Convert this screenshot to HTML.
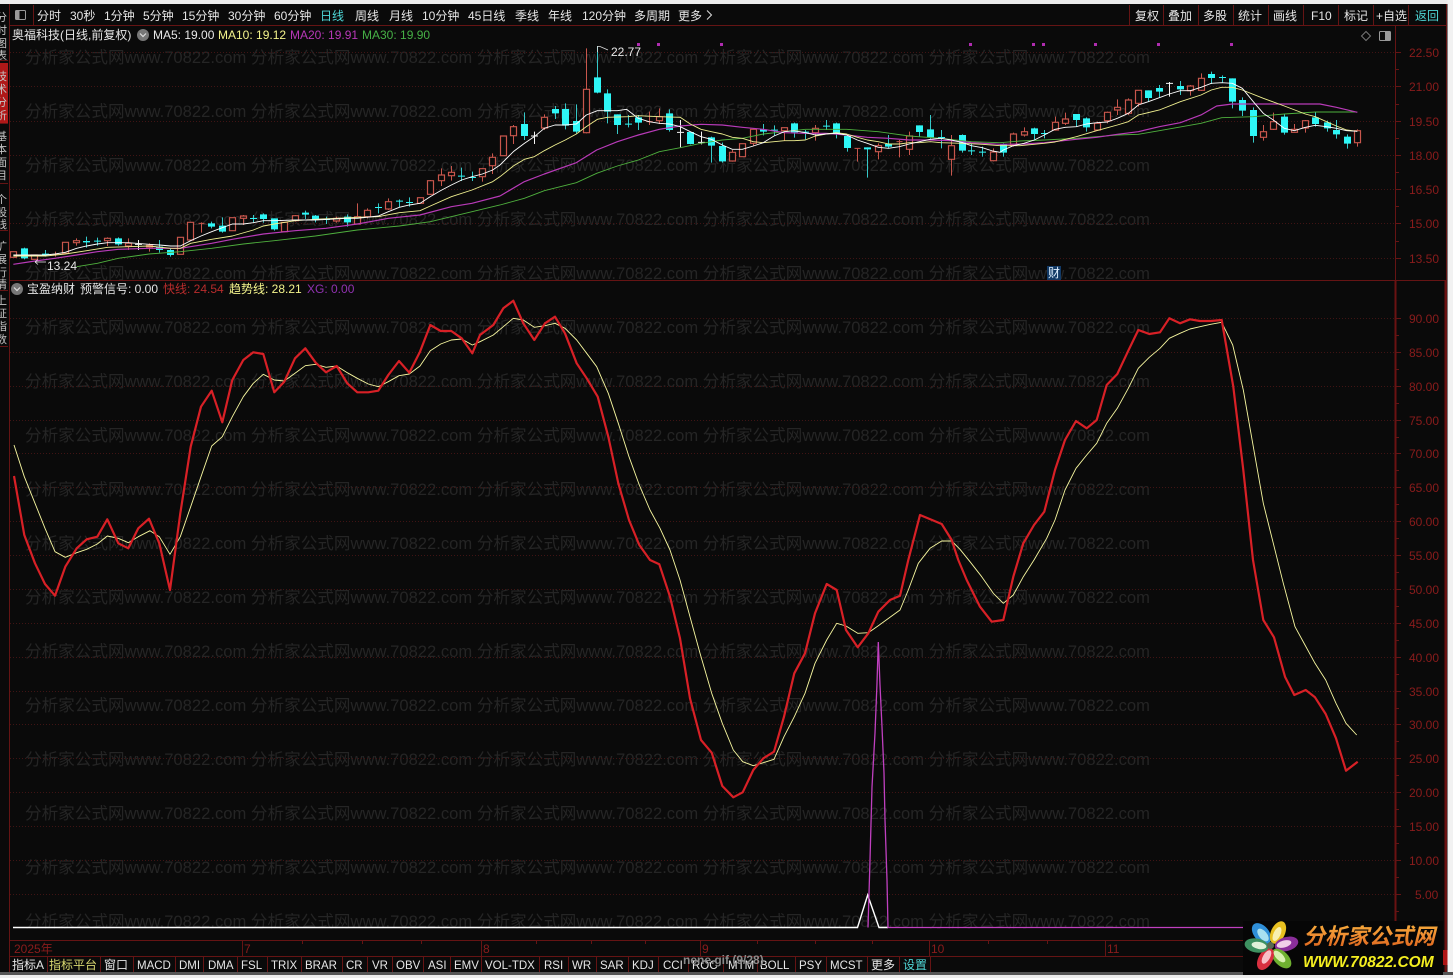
<!DOCTYPE html>
<html><head><meta charset="utf-8"><style>
html,body{margin:0;padding:0;background:#0a0a0a;width:1453px;height:978px;overflow:hidden}
svg{display:block;position:absolute;left:0;top:0;font-family:"Liberation Sans","Noto Sans CJK SC",sans-serif;font-size:12px;filter:blur(.3px)}
.ns *{vector-effect:non-scaling-stroke}
.wm text{font-size:16.6px;fill:#252525}
.t text{fill:#e6e6e6}
.ax text{fill:#8a1c1c}
.b text{font-size:11.5px;fill:#e6e6e6}
</style></head><body>
<svg width="1453" height="978" viewBox="0 0 1453 978" xmlns="http://www.w3.org/2000/svg">
<defs><linearGradient id="lg" x1="0" y1="0" x2="0" y2="1"><stop offset="0" stop-color="#f8b840"/><stop offset=".55" stop-color="#ee8a30"/><stop offset="1" stop-color="#d85a18"/></linearGradient></defs>
<rect width="1453" height="978" fill="#0a0a0a"/>
<g class="wm">
<text x="25" y="9">分析家公式网www.70822.com 分析家公式网www.70822.com 分析家公式网www.70822.com 分析家公式网www.70822.com 分析家公式网www.70822.com</text>
<text x="25" y="63">分析家公式网www.70822.com 分析家公式网www.70822.com 分析家公式网www.70822.com 分析家公式网www.70822.com 分析家公式网www.70822.com</text>
<text x="25" y="117">分析家公式网www.70822.com 分析家公式网www.70822.com 分析家公式网www.70822.com 分析家公式网www.70822.com 分析家公式网www.70822.com</text>
<text x="25" y="171">分析家公式网www.70822.com 分析家公式网www.70822.com 分析家公式网www.70822.com 分析家公式网www.70822.com 分析家公式网www.70822.com</text>
<text x="25" y="225">分析家公式网www.70822.com 分析家公式网www.70822.com 分析家公式网www.70822.com 分析家公式网www.70822.com 分析家公式网www.70822.com</text>
<text x="25" y="279">分析家公式网www.70822.com 分析家公式网www.70822.com 分析家公式网www.70822.com 分析家公式网www.70822.com 分析家公式网www.70822.com</text>
<text x="25" y="333">分析家公式网www.70822.com 分析家公式网www.70822.com 分析家公式网www.70822.com 分析家公式网www.70822.com 分析家公式网www.70822.com</text>
<text x="25" y="387">分析家公式网www.70822.com 分析家公式网www.70822.com 分析家公式网www.70822.com 分析家公式网www.70822.com 分析家公式网www.70822.com</text>
<text x="25" y="441">分析家公式网www.70822.com 分析家公式网www.70822.com 分析家公式网www.70822.com 分析家公式网www.70822.com 分析家公式网www.70822.com</text>
<text x="25" y="495">分析家公式网www.70822.com 分析家公式网www.70822.com 分析家公式网www.70822.com 分析家公式网www.70822.com 分析家公式网www.70822.com</text>
<text x="25" y="549">分析家公式网www.70822.com 分析家公式网www.70822.com 分析家公式网www.70822.com 分析家公式网www.70822.com 分析家公式网www.70822.com</text>
<text x="25" y="603">分析家公式网www.70822.com 分析家公式网www.70822.com 分析家公式网www.70822.com 分析家公式网www.70822.com 分析家公式网www.70822.com</text>
<text x="25" y="657">分析家公式网www.70822.com 分析家公式网www.70822.com 分析家公式网www.70822.com 分析家公式网www.70822.com 分析家公式网www.70822.com</text>
<text x="25" y="711">分析家公式网www.70822.com 分析家公式网www.70822.com 分析家公式网www.70822.com 分析家公式网www.70822.com 分析家公式网www.70822.com</text>
<text x="25" y="765">分析家公式网www.70822.com 分析家公式网www.70822.com 分析家公式网www.70822.com 分析家公式网www.70822.com 分析家公式网www.70822.com</text>
<text x="25" y="819">分析家公式网www.70822.com 分析家公式网www.70822.com 分析家公式网www.70822.com 分析家公式网www.70822.com 分析家公式网www.70822.com</text>
<text x="25" y="873">分析家公式网www.70822.com 分析家公式网www.70822.com 分析家公式网www.70822.com 分析家公式网www.70822.com 分析家公式网www.70822.com</text>
<text x="25" y="927">分析家公式网www.70822.com 分析家公式网www.70822.com 分析家公式网www.70822.com 分析家公式网www.70822.com 分析家公式网www.70822.com</text>
</g>
<!-- grid -->
<path d="M10 52.5H1395M10 86.5H1395M10 121.5H1395M10 155.5H1395M10 189.5H1395M10 223.5H1395M10 258.5H1395M10 318.5H1395M10 352.5H1395M10 386.5H1395M10 420.5H1395M10 453.5H1395M10 487.5H1395M10 521.5H1395M10 555.5H1395M10 589.5H1395M10 623.5H1395M10 657.5H1395M10 691.5H1395M10 724.5H1395M10 758.5H1395M10 792.5H1395M10 826.5H1395M10 860.5H1395M10 894.5H1395" stroke="#401414" stroke-width="1" stroke-dasharray="1 2" fill="none"/>
<!-- frame -->
<rect x="10" y="4" width="1436" height="21" fill="#0a0a0a"/>
<path d="M9.5 4V972M33.5 5V25M10 25.5H1446M10 280.5H1446M10 940.5H1395M10 956.5H1395M1395.5 25V972M1446.5 4V972" stroke="#651414" stroke-width="1" fill="none"/>
<path d="M1395.5 280V972M1445.5 280V972" stroke="#6a1212" stroke-width="2" fill="none"/>
<path d="M1129.5 5V25M1163.5 5V25M1198.5 5V25M1233.5 5V25M1268.5 5V25M1303.5 5V25M1338.5 5V25M1373.5 5V25M1408.5 5V25" stroke="#651414" fill="none"/>
<path d="M1395 52.5h6M1395 69.5h4M1395 86.5h6M1395 104.5h4M1395 121.5h6M1395 138.5h4M1395 155.5h6M1395 172.5h4M1395 189.5h6M1395 206.5h4M1395 223.5h6M1395 241.5h4M1395 258.5h6M1395 318.5h6M1395 335.5h4M1395 352.5h6M1395 369.5h4M1395 386.5h6M1395 403.5h4M1395 420.5h6M1395 437.5h4M1395 453.5h6M1395 470.5h4M1395 487.5h6M1395 504.5h4M1395 521.5h6M1395 538.5h4M1395 555.5h6M1395 572.5h4M1395 589.5h6M1395 606.5h4M1395 623.5h6M1395 640.5h4M1395 657.5h6M1395 674.5h4M1395 691.5h6M1395 708.5h4M1395 724.5h6M1395 741.5h4M1395 758.5h6M1395 775.5h4M1395 792.5h6M1395 809.5h4M1395 826.5h6M1395 843.5h4M1395 860.5h6M1395 877.5h4M1395 894.5h6M1395 911.5h4" stroke="#651414" fill="none"/>
<path d="M242.5 941V956M302.5 941v3M362.5 941v3M421.5 941v3M481.5 941V956M536.5 941v3M591.5 941v3M645.5 941v3M700.5 941V956M757.5 941v3M815.5 941v3M872.5 941v3M929.5 941V956M988.5 941v3M1047.5 941v3M1105.5 941V956" stroke="#651414" fill="none"/>
<path d="M47.5 957V972M100.5 957V972M133.5 957V972M175.5 957V972M203.5 957V972M237.5 957V972M267.5 957V972M301.5 957V972M342.5 957V972M367.5 957V972M392.5 957V972M423.5 957V972M450.5 957V972M481.5 957V972M539.5 957V972M568.5 957V972M596.5 957V972M628.5 957V972M658.5 957V972M688.5 957V972M723.5 957V972M757.5 957V972M795.5 957V972M826.5 957V972M867.5 957V972M899.5 957V972M930.5 957V972" stroke="#651414" fill="none"/>
<!-- candles -->
<g class="ns" transform="scale(1 .33333)" fill="none">
<path stroke="#c8564c" stroke-width="1" d="M55.5 755V770M52.5 763H58.5M76.5 715V737M107.5 712V738M128.5 715V750M149.5 730V755M201.5 667V698M198.5 670H204.5M243.5 645V675M295.5 645V665M336.5 650V668M357.5 610V672M367.5 625V655M388.5 595V630M430.5 540V585M441.5 505V558M451.5 498V542M482.5 505V545M492.5 460V522M513.5 375V432M544.5 343V390M586.5 145V400M649.5 335V375M646.5 365H652.5M659.5 325V372M732.5 450V485M753.5 385V438M784.5 382V422M815.5 375V422M857.5 445V485M854.5 445H860.5M878.5 430V478M899.5 420V472M896.5 425H902.5M909.5 395V465M951.5 405V527M993.5 445V484M1013.5 398V440M1024.5 382V410M1055.5 350V392M1065.5 338V375M1097.5 365V392M1107.5 335V370M1117.5 298V345M1128.5 295V345M1138.5 270V320M1190.5 255V287M1201.5 220V273M1263.5 375V422M1273.5 338V390M1294.5 372V398M1305.5 360V398M1357.5 388V440"/>
<path stroke="#c8564c" stroke-width="1.2" fill="#0a0a0a" d="M10.5 755H16.5V772H10.5ZM31.5 765H37.5V778H31.5ZM62.5 727H68.5V760H62.5ZM73.5 722H79.5V728H73.5ZM104.5 715H110.5V722H104.5ZM125.5 730H131.5V738H125.5ZM146.5 736H152.5V741H146.5ZM177.5 712H183.5V763H177.5ZM187.5 667H193.5V720H187.5ZM229.5 653H235.5V692H229.5ZM240.5 648H246.5V655H240.5ZM281.5 667H287.5V695H281.5ZM292.5 647H298.5V662H292.5ZM333.5 655H339.5V663H333.5ZM354.5 650H360.5V672H354.5ZM364.5 631H370.5V650H364.5ZM385.5 605H391.5V627H385.5ZM417.5 593H423.5V610H417.5ZM427.5 542H433.5V583H427.5ZM438.5 525H444.5V542H438.5ZM448.5 517H454.5V527H448.5ZM479.5 506H485.5V530H479.5ZM489.5 472H495.5V497H489.5ZM500.5 408H506.5V467H500.5ZM510.5 380H516.5V407H510.5ZM541.5 352H547.5V384H541.5ZM583.5 268H589.5V398H583.5ZM656.5 350H662.5V362H656.5ZM729.5 457H735.5V483H729.5ZM739.5 431H745.5V470H739.5ZM750.5 388H756.5V430H750.5ZM781.5 383H787.5V392H781.5ZM812.5 385H818.5V398H812.5ZM875.5 437H881.5V455H875.5ZM906.5 408H912.5V448H906.5ZM948.5 437H954.5V478H948.5ZM990.5 456H996.5V482H990.5ZM1010.5 402H1016.5V435H1010.5ZM1021.5 395H1027.5V405H1021.5ZM1052.5 367H1058.5V390H1052.5ZM1062.5 357H1068.5V370H1062.5ZM1094.5 370H1100.5V390H1094.5ZM1104.5 337H1110.5V362H1104.5ZM1114.5 322H1120.5V330H1114.5ZM1125.5 300H1131.5V340H1125.5ZM1135.5 271H1141.5V310H1135.5ZM1187.5 258H1193.5V272H1187.5ZM1198.5 235H1204.5V271H1198.5ZM1260.5 395H1266.5V412H1260.5ZM1270.5 365H1276.5V388H1270.5ZM1291.5 388H1297.5V397H1291.5ZM1302.5 362H1308.5V384H1302.5ZM1354.5 392H1360.5V428H1354.5Z"/>
<path stroke="#35c8c8" stroke-width="1" d="M24.5 743V778M45.5 750V770M86.5 710V743M97.5 713V737M118.5 712V737M159.5 720V758M170.5 745V770M211.5 665V685M222.5 652V698M253.5 645V667M263.5 640V668M274.5 655V692M305.5 632V657M315.5 645V667M326.5 650V672M347.5 643V680M378.5 610V640M399.5 598V622M409.5 592V620M461.5 503V543M472.5 515V543M524.5 337V420M555.5 318V357M565.5 310V388M576.5 313V400M597.5 138V280M607.5 268V370M617.5 343V402M628.5 345V382M638.5 345V390M669.5 328V395M690.5 395V433M711.5 410V488M722.5 428V488M763.5 372V406M774.5 376V406M794.5 368V413M805.5 390V418M826.5 360V390M836.5 368V415M847.5 405V455M867.5 442V533M888.5 405V445M919.5 376V410M930.5 345V416M941.5 390V445M962.5 403V458M971.5 430V465M982.5 440V470M1003.5 430V470M1034.5 383V418M1044.5 390V415M1076.5 342V380M1086.5 352V395M1148.5 271V305M1159.5 255V292M1180.5 243V285M1211.5 215V252M1222.5 226V248M1232.5 235V325M1242.5 292V348M1253.5 322V428M1284.5 342V404M1315.5 337V380M1327.5 362V395M1336.5 360V416M1347.5 403V446"/>
<path stroke="#2ef6f6" stroke-width="7" d="M24.5 745V775M45.5 761V764M86.5 723V727M97.5 722V725M118.5 715V733M159.5 740V750M170.5 750V765M211.5 670V680M222.5 677V695M253.5 654V657M263.5 643V657M274.5 655V688M305.5 638V644M315.5 647V660M326.5 657V660M347.5 650V667M378.5 621V624M399.5 602V605M409.5 606V609M461.5 527V530M472.5 531V534M524.5 372V408M555.5 327V340M565.5 327V377M576.5 363V395M597.5 232V278M607.5 280V335M617.5 343V375M628.5 371V374M638.5 352V368M669.5 340V390M690.5 396V432M711.5 412V437M722.5 438V484M763.5 388V395M774.5 389V392M794.5 370V397M805.5 395V398M826.5 377V380M836.5 370V402M847.5 408V444M867.5 442V448M888.5 432V440M919.5 376V396M930.5 388V412M941.5 411V414M962.5 405V452M971.5 451V454M982.5 455V458M1003.5 432V458M1034.5 385V402M1044.5 399V402M1076.5 342V360M1086.5 355V382M1148.5 271V294M1159.5 264V275M1180.5 258V268M1211.5 222V234M1222.5 231V234M1232.5 235V305M1242.5 300V332M1253.5 330V408M1284.5 350V398M1315.5 352V372M1327.5 367V385M1336.5 390V403M1347.5 410V431"/>
<path stroke="#f4f4f4" stroke-width="1" d="M138.5 720V750M135 733H142M534.5 395V432M531 408H538M680.5 360V442M677 397H684M701.5 395V433M698 427H705M1169.5 246V290M1166 250H1173"/>
</g>
<!-- MAs -->
<g class="ns" transform="scale(.33333)" fill="none" stroke-width="1" stroke-linejoin="round">
<g stroke="#4fb03e" stroke-width=".9">
<polyline points="230,800 292,790 355,775 447,762 541,755 635,745 730,732 823,722 946,708 1072,690 1198,678 1291,665 1416,635 1500,615"/>
<polyline transform="translate(1500 0)" points="0,615 73,595 133,572 229,548 290,520 352,498 415,480 478,455 541,443 603,430 667,420 727,415 790,402 853,395 916,388 1040,388 1135,395 1228,408 1322,415 1414,425 1500,428"/>
<polyline transform="translate(3000 0)" points="0,428 60,423 133,420 229,415 352,405 415,403 478,392 603,370 665,353 760,350 853,342 946,336 1072,336"/>
</g>
<g stroke="#b83ab8" stroke-width="1.2">
<polyline points="40,793 105,783 165,775 230,765 292,755 355,748 447,745 541,745 635,730 697,718 790,702 885,692 978,685 1072,672 1165,655 1260,645 1354,620 1416,610 1500,588"/>
<polyline transform="translate(1500 0)" points="0,588 73,545 133,522 229,488 290,450 352,425 415,405 478,388 541,378 603,373 667,375 727,382 790,388 853,398 916,400 978,400 1040,405 1102,412 1165,415 1228,420 1291,420 1354,422 1414,428 1500,433"/>
<polyline transform="translate(3000 0)" points="0,433 72,432 133,428 229,418 290,412 352,403 415,395 478,380 541,368 603,345 650,318 697,312 760,312 853,312 960,312 1009,322 1072,337"/>
</g>
<g stroke="#f0f090" stroke-width=".9">
<polyline points="40,768 137,768 196,762 260,752 323,742 385,740 447,738 512,745 541,745 572,730 635,718 697,708 760,690 790,678 823,672 885,662 946,658 1010,655 1072,652 1135,650 1198,638 1260,632 1291,618 1354,590 1416,570 1478,545 1500,530"/>
<polyline transform="translate(1500 0)" points="0,530 40,498 73,478 103,470 133,452 165,435 196,420 229,402 259,380 292,358 322,352 385,350 415,347 478,350 541,352 571,372 603,388 634,395 667,402 697,412 727,415 760,425 790,428 822,425 853,422 883,422 916,420 946,408 978,402 1009,398 1040,402 1072,412 1102,420 1135,425 1165,432 1198,432 1228,428 1258,428 1291,425 1322,428 1385,430 1447,433 1500,437"/>
<polyline transform="translate(3000 0)" points="0,437 60,437 133,430 165,426 229,410 290,392 352,375 385,365 415,345 478,330 541,305 603,285 634,270 665,262 697,262 727,270 790,295 853,318 916,342 946,350 1009,378 1040,390 1072,394"/>
</g>
<g stroke="#ffffff" stroke-width=".9">
<polyline points="40,765 72,765 137,765 165,762 196,757 230,745 260,738 292,732 323,728 385,728 447,733 478,735 512,738 541,738 572,722 603,708 635,695 667,683 697,672 730,672 760,668 790,662 823,662 885,660 946,660 1042,655 1072,655 1135,648 1165,635 1198,622 1228,615 1260,610 1291,590 1322,572 1354,555 1385,540 1416,530 1447,522 1478,510 1500,495"/>
<polyline transform="translate(1500 0)" points="0,495 40,455 73,430 103,410 133,385 165,375 196,375 229,372 259,345 292,332 322,332 352,332 380,328 415,355 447,365 478,370 508,372 541,380 571,395 603,410 634,418 667,435 697,448 727,448 760,438 790,428 822,408 853,395 883,392 916,398 946,405 978,402 1009,400 1040,405 1072,420 1102,430 1135,442 1165,445 1198,440 1228,432 1258,425 1291,418 1322,415 1354,420 1385,427 1414,437 1447,443 1478,453 1500,457"/>
<polyline transform="translate(3000 0)" points="0,457 10,450 40,437 72,430 103,420 133,405 165,388 196,382 229,380 259,372 290,368 322,366 352,355 385,340 415,315 445,305 478,293 508,282 541,272 571,272 603,262 634,250 665,248 697,250 727,265 760,305 790,340 820,360 853,385 883,392 916,382 946,376 980,380 1009,385 1040,392 1072,394"/>
</g>
</g>
<path d="M637 43h3v3h-3zM657 43h3v3h-3zM720 43h3v3h-3zM969 43h3v3h-3zM1032 43h3v3h-3zM1042 43h3v3h-3zM1094 43h3v3h-3zM1157 43h3v3h-3zM1230 43h3v3h-3z" fill="#b02cb0"/>
<!-- price extremes -->
<path d="M597.5 46V52M597.5 46.500H600L608 50" stroke="#ddd" stroke-width=".8" fill="none"/>
<text x="611" y="56" fill="#e8e8e8">22.77</text>
<path d="M35 262H46M35 262L38 259.5M35 262L38 264.5" stroke="#eee" stroke-width=".8" fill="none"/>
<text x="47" y="270" fill="#e8e8e8">13.24</text>
<rect x="1047" y="266" width="14" height="14" fill="#123a66"/>
<text x="1048" y="277" fill="#dff0ff">财</text>
<!-- lower chart -->
<polyline fill="none" stroke="#f8f8a0" stroke-width=".9" stroke-linejoin="round" points="14,445 24.3,476.7 35,503.3 45,528.3 55,551.7 65.3,557.3 76.7,552.7 86.7,549.3 97.3,544 107.3,536 118.3,538.3 128.3,542.7 138.3,536.7 150,530.7 159.3,536.7 170,554.3 180.3,536.7 190.7,506.7 201,476.7 211.7,446 222.3,436.7 232.3,416.7 243.3,396.7 253.3,383.3 263.3,374.3 274.3,380 284.3,381 295,373.3 305.3,365.7 315.7,364.3 326,367.3 336.7,366 347.3,372.7 357.3,378.3 368.3,384 378.3,386.7 388.3,381.7 399,375.7 409.3,374 420,366 430.3,350.7 440.7,344 451.3,340 461.7,339 472.3,345 480,341.7 493.3,335 503.3,326.7 513.3,318.3 523.3,320 534.3,327.3 545,325.7 555,323.3 565,328.3 576.7,340 586.7,353.3 596.7,366.7 608.3,393.3 618.3,423.3 629,456.7 639.3,485 650,510 660,528.3 670,550 680,580 690,616.7 700,653.3 711.7,693.3 722.3,723.3 733.3,750 742.7,761.7 753.3,765.7 763.3,762.7 774,759.3 784,736.7 794.3,716.7 805,693.3 815,663.3 826.7,640 836.7,623.3 846,626 857.7,633.3 868.3,632.7 878.3,625.7 890,617.3 900,610 908.3,590 918.3,563.3 930,548.3 941.7,541 951.7,541 960,549.3 970,561.7 981.7,576.7 993.3,593.3 1003.3,603.3 1013.3,595 1023.3,576.7 1034,560 1046.7,538.3 1055,520 1065,490 1076,468.3 1086.7,455 1096.7,443.3 1106.7,423.3 1117.3,408.3 1128.3,388.3 1138.3,368.3 1149.3,357.3 1160,348.3 1169.3,338.3 1180,333.3 1190,329 1200,326.7 1210.7,324.3 1221.7,322.3 1232.7,345 1243.3,390 1253.3,446.7 1263.3,503.3 1273.3,543.3 1283.3,583.3 1295,626.7 1305,645 1315,663.3 1325.7,680 1336,703.3 1346,723.3 1356.7,735"/>
<polyline fill="none" stroke="#d82026" stroke-width="2.2" stroke-linejoin="round" points="14,476 24.3,535 35,563.3 45,584 55,595.7 65.3,566.7 76.7,548.3 86.7,539.3 97.3,536.7 107.3,519.3 118.3,543.3 128.3,548.3 138.3,528.3 149,518.7 159.3,543.3 170,590 180.3,513.3 190.7,446.7 201,406.7 211.7,390.7 222.3,422.3 232.3,380 243.3,360 253.3,352.3 263.3,354 274.3,392.3 284.3,381.7 295,358.3 305.3,348.3 315.7,362.7 326,372.3 336.7,366 347.3,383.3 357.3,392.3 368.3,392.3 378.3,390.7 388.3,375 399,361 409.3,372.7 420,351.7 430.3,325 440.7,331 451.3,331 461.7,338.3 472.3,353.3 480,335 493.3,325 503.3,308.3 513.3,300.7 523.3,323.3 534.3,340 545,323.3 555,316.7 565,333.3 576.7,363.3 586.7,378.3 597.7,396.7 608.3,436.7 618.3,483.3 629,520 639.3,545 650,560 659.3,564.3 670,596.7 680,638.3 690,698.3 701,740 711.7,752.7 722.3,786 733.3,797.3 742.7,792.3 753.3,770 763.3,758.3 774,751.7 784,716.7 794.3,673.3 805,653.3 815,613.3 826.7,584 836.7,590 846,630 857.7,647.3 868.3,633.3 878.3,611.7 890,600 900,595.7 908.3,560 920,515 941.7,524 951.7,540 958.3,560 966.7,580 980,606.7 991.7,621.7 1003.3,620 1013.3,576.7 1023.3,543.3 1034,525 1044.3,511.7 1055,470 1065,440 1076,421 1086.7,428.3 1096.7,420 1106.7,385 1117.3,374 1128.3,350.7 1138.3,330 1149.3,334 1160,332.3 1169.3,318.3 1180,323.3 1190,319.3 1200,321 1210.7,321 1221.7,320 1233.3,386.7 1243.3,470 1253,560 1263.3,620 1274,637.3 1285,676.7 1294.3,695 1305.7,690 1315,697.3 1325.7,714 1336,738.3 1346,770.7 1357.7,761.7"/>
<polyline fill="none" stroke="#fff" stroke-width="1.4" points="13,927.5 857.5,927.5 867.7,895 879,927.5 888,927.5"/>
<polyline fill="none" stroke="#c040c0" stroke-width="1.3" points="868,927.5 870,860 872,787 875,733 877,683 878.3,642 880,685 882,727 884,773 885,820 887,880 888,927.5 1357,927.5"/>
<!-- toolbar -->
<g fill="none" stroke="#9a9a9a"><rect x="15.5" y="10.5" width="10" height="9" rx="1"/></g><rect x="16" y="11" width="3.5" height="8" fill="#9a9a9a"/>
<g class="t">
<text x="37" y="20">分时</text><text x="70" y="20">30秒</text><text x="104" y="20">1分钟</text><text x="143" y="20">5分钟</text><text x="182" y="20">15分钟</text><text x="228" y="20">30分钟</text><text x="274" y="20">60分钟</text><text x="320" y="20" style="fill:#4fd6d6">日线</text><text x="355" y="20">周线</text><text x="389" y="20">月线</text><text x="422" y="20">10分钟</text><text x="468" y="20">45日线</text><text x="515" y="20">季线</text><text x="548" y="20">年线</text><text x="582" y="20">120分钟</text><text x="634" y="20">多周期</text><text x="678" y="20">更多</text>
<text x="1135" y="20">复权</text><text x="1168" y="20">叠加</text><text x="1203" y="20">多股</text><text x="1238" y="20">统计</text><text x="1273" y="20">画线</text><text x="1311" y="20">F10</text><text x="1344" y="20">标记</text><text x="1376" y="20">+自选</text><text x="1415" y="20" style="fill:#4fd6d6">返回</text>
</g>
<path d="M707 10.5L711.5 15L707 19.5" fill="none" stroke="#ddd"/>
<!-- headers -->
<circle cx="143" cy="35" r="6" fill="#777"/><path d="M140 33.5L143 36.5L146 33.5" fill="none" stroke="#ddd" stroke-width="1.2"/>
<circle cx="17" cy="289" r="6" fill="#777"/><path d="M14 287.5L17 290.5L20 287.5" fill="none" stroke="#ddd" stroke-width="1.2"/>
<text x="12" y="39" fill="#e6e6e6">奥福科技(日线,前复权)</text>
<text x="153" y="39" fill="#e8e8e8">MA5: 19.00</text>
<text x="218" y="39" fill="#f4f48c">MA10: 19.12</text>
<text x="290" y="39" fill="#b838b8">MA20: 19.91</text>
<text x="362" y="39" fill="#46b046">MA30: 19.90</text>
<text x="27" y="293" fill="#e6e6e6">宝盈纳财</text>
<text x="80" y="293" fill="#e6e6e6">预警信号: 0.00</text>
<text x="163" y="293" fill="#b82c2c">快线: 24.54</text>
<text x="229" y="293" fill="#f4f48c">趋势线: 28.21</text>
<text x="307" y="293" fill="#9032b0">XG: 0.00</text>
<path d="M1366 31.5L1370.5 36L1366 40.500L1361.500 36Z" fill="none" stroke="#777"/>
<rect x="1379.500" y="31.500" width="11" height="9" rx="1" fill="none" stroke="#999"/><rect x="1385" y="32" width="5" height="8" fill="#999"/>
<!-- axis labels -->
<g class="ax">
<text x="1409" y="57">22.50</text><text x="1409" y="91">21.00</text><text x="1409" y="126">19.50</text><text x="1409" y="160">18.00</text><text x="1409" y="194">16.50</text><text x="1409" y="228">15.00</text><text x="1409" y="263">13.50</text>
<text x="1409" y="323">90.00</text><text x="1409" y="357">85.00</text><text x="1409" y="391">80.00</text><text x="1409" y="425">75.00</text><text x="1409" y="458">70.00</text><text x="1409" y="492">65.00</text><text x="1409" y="526">60.00</text><text x="1409" y="560">55.00</text><text x="1409" y="594">50.00</text><text x="1409" y="628">45.00</text><text x="1409" y="662">40.00</text><text x="1409" y="696">35.00</text><text x="1409" y="729">30.00</text><text x="1409" y="763">25.00</text><text x="1409" y="797">20.00</text><text x="1409" y="831">15.00</text><text x="1409" y="865">10.00</text><text x="1415" y="899">5.00</text>
<text x="14" y="953">2025年</text><text x="244" y="953">7</text><text x="483" y="953">8</text><text x="702" y="953">9</text><text x="931" y="953">10</text><text x="1107" y="953">11</text>
</g>
<!-- bottom tabs -->
<g class="b">
<text x="12" y="969" style="font-size:12px">指标A</text><text x="49" y="969" style="fill:#d8d870;font-size:12px">指标平台</text><text x="104" y="969" style="font-size:12px">窗口</text><text x="137" y="969">MACD</text><text x="179" y="969">DMI</text><text x="208" y="969">DMA</text><text x="241" y="969">FSL</text><text x="271" y="969">TRIX</text><text x="305" y="969">BRAR</text><text x="346" y="969">CR</text><text x="372" y="969">VR</text><text x="396" y="969">OBV</text><text x="428" y="969">ASI</text><text x="454" y="969">EMV</text><text x="485" y="969">VOL-TDX</text><text x="544" y="969">RSI</text><text x="572" y="969">WR</text><text x="600" y="969">SAR</text><text x="632" y="969">KDJ</text><text x="663" y="969">CCI</text><text x="692" y="969">ROC</text><text x="728" y="969">MTM</text><text x="760" y="969">BOLL</text><text x="799" y="969">PSY</text><text x="830" y="969">MCST</text><text x="871" y="969" style="font-size:12px">更多</text><text x="903" y="969" style="font-size:12px;fill:#4fd6d6">设置</text>
</g>
<text x="683" y="964" font-weight="bold" fill="#8a8a8a">nene.gif (9/28)</text>
<!-- left sidebar -->
<rect x="0" y="63" width="8" height="60" fill="#b01818"/>
<g fill="#c4c4c4" style="font-size:11px">
<text x="-4" y="21">分</text><text x="-4" y="34">时</text><text x="-4" y="47">图</text><text x="-4" y="59">表</text>
<text x="-4" y="80">技</text><text x="-4" y="93">术</text><text x="-4" y="106">分</text><text x="-4" y="119">析</text>
<text x="-4" y="140">基</text><text x="-4" y="153">本</text><text x="-4" y="166">面</text><text x="-4" y="179">目</text>
<text x="-4" y="203">个</text><text x="-4" y="216">股</text><text x="-4" y="228">线</text>
<text x="-4" y="250">扩</text><text x="-4" y="263">展</text><text x="-4" y="276">行</text><text x="-4" y="288">情</text>
<text x="-4" y="304">上</text><text x="-4" y="317">证</text><text x="-4" y="330">指</text><text x="-4" y="343">数</text>
</g>
<path d="M0 60.500H9M0 123.500H9M0 183.500H9M0 230.500H9M0 290.500H9M0 346.500H9" stroke="#651414" fill="none"/>
<rect x="8" y="0" width="1" height="978" fill="#0a0a0a"/>
<!-- page edges -->
<rect x="0" y="0" width="1453" height="4" fill="#ececec"/>
<rect x="1447.500" y="0" width="6" height="978" fill="#f2f2f2"/>
<rect x="0" y="972" width="1453" height="3" fill="#555"/>
<rect x="0" y="975" width="1453" height="3" fill="#ececec"/>
<!-- logo -->
<rect x="1243" y="921" width="200" height="54" fill="#060606"/>
<rect x="1443" y="950" width="4.500" height="15" fill="#b01616"/>
<g>
<ellipse cx="1261.500" cy="933.500" rx="12" ry="7.500" transform="rotate(50 1261.500 933.500)" fill="#2f8fd8"/>
<ellipse cx="1278" cy="932.500" rx="12" ry="7" transform="rotate(-65 1278 932.500)" fill="#e8c020"/>
<ellipse cx="1286.500" cy="944" rx="12" ry="7" transform="rotate(-15 1286.500 944)" fill="#8a2e9a"/>
<ellipse cx="1281.500" cy="958.500" rx="12" ry="7" transform="rotate(45 1281.500 958.500)" fill="#6fb030"/>
<ellipse cx="1265.500" cy="959" rx="12" ry="7" transform="rotate(-60 1265.500 959)" fill="#d83040"/>
<ellipse cx="1256.500" cy="945.500" rx="12" ry="7" transform="rotate(10 1256.500 945.500)" fill="#3e9060"/>
<ellipse cx="1263" cy="935" rx="7.500" ry="4" transform="rotate(50 1263 935)" fill="#a8e0f0"/>
<ellipse cx="1277" cy="934" rx="7.500" ry="3.500" transform="rotate(-65 1277 934)" fill="#f8f0b0"/>
<ellipse cx="1284" cy="944" rx="7.500" ry="3.500" transform="rotate(-15 1284 944)" fill="#f0d0e8"/>
<ellipse cx="1279.500" cy="956.500" rx="7.500" ry="3.500" transform="rotate(45 1279.500 956.500)" fill="#d8f0b0"/>
<ellipse cx="1266.500" cy="957" rx="7.500" ry="3.500" transform="rotate(-60 1266.500 957)" fill="#f8c0c8"/>
<ellipse cx="1259" cy="945.500" rx="7.500" ry="3.500" transform="rotate(10 1259 945.500)" fill="#e0f0d8"/>
<circle cx="1270.500" cy="945.500" r="3.500" fill="#5a6a50"/>
</g>
<text x="1303" y="944" style="font-size:22px;font-weight:bold;font-style:italic;font-family:'Noto Sans CJK SC','Liberation Sans',sans-serif" fill="url(#lg)">分析家公式网</text>
<text x="1303" y="967" style="font-size:15.500px;font-weight:bold;font-style:italic" fill="#f4ee20">WWW.70822.COM</text>
</svg>
</body></html>
